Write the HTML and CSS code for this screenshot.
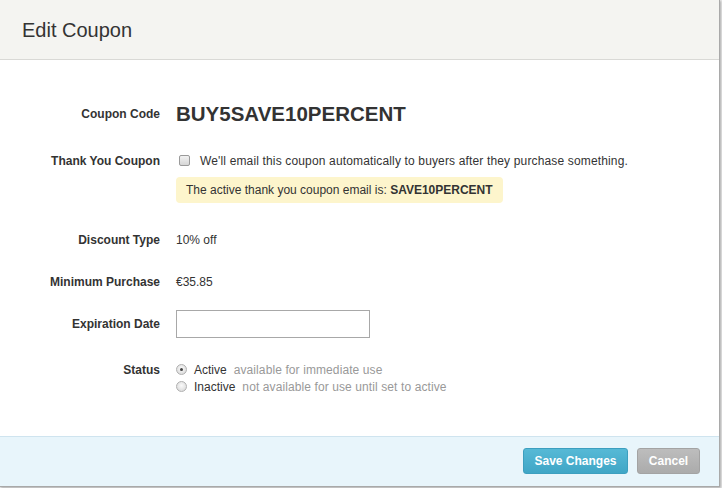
FILE: index.html
```html
<!DOCTYPE html>
<html>
<head>
<meta charset="utf-8">
<link rel="stylesheet" href="styles.css">
</head>
<body>
<div class="dialog">
  <div class="dialog-header"><h1 class="title">Edit Coupon</h1></div>
  <div class="dialog-body">
    <div class="row row-code">
      <div class="label">Coupon Code</div>
      <div class="value code">BUY5SAVE10PERCENT</div>
    </div>
    <div class="row row-thanks">
      <div class="label">Thank You Coupon</div>
      <div class="value">
        <label class="check-line"><span class="checkbox"></span>We'll email this coupon automatically to buyers after they purchase something.</label>
        <div class="notice">The active thank you coupon email is: <strong>SAVE10PERCENT</strong></div>
      </div>
    </div>
    <div class="row row-discount">
      <div class="label">Discount Type</div>
      <div class="value">10% off</div>
    </div>
    <div class="row row-min">
      <div class="label">Minimum Purchase</div>
      <div class="value">€35.85</div>
    </div>
    <div class="row row-exp">
      <div class="label">Expiration Date</div>
      <div class="value"><span class="input"></span></div>
    </div>
    <div class="row row-status">
      <div class="label">Status</div>
      <div class="value">
        <div class="radio-line"><span class="radio checked"></span><span class="opt">Active</span><span class="desc">available for immediate use</span></div>
        <div class="radio-line"><span class="radio"></span><span class="opt">Inactive</span><span class="desc">not available for use until set to active</span></div>
      </div>
    </div>
  </div>
  <div class="dialog-footer">
    <button class="btn btn-primary">Save Changes</button>
    <button class="btn btn-cancel">Cancel</button>
  </div>
</div>
</body>
</html>
```

FILE: styles.css
```css
html, body {
  margin: 0;
  padding: 0;
  background: #e9e9e9;
}
body {
  width: 722px;
  height: 488px;
  overflow: hidden;
  font-family: "Liberation Sans", Arial, sans-serif;
  color: #333;
  font-size: 12px;
}
.dialog {
  width: 720px;
  height: 487px;
  background: #fff;
  border-right: 1px solid #a9a9a9;
  border-bottom: 1px solid #a9a9a9;
  box-shadow: 1px 1px 2px rgba(0,0,0,0.25);
  display: flex;
  flex-direction: column;
  box-sizing: border-box;
}
.dialog-header {
  height: 60px;
  box-sizing: border-box;
  background: #f4f4f1;
  border-bottom: 1px solid #d9d9d6;
  padding: 0 22px;
  display: flex;
  align-items: center;
}
.title {
  margin: 0;
  font-size: 20px;
  font-weight: normal;
  color: #333;
  line-height: 24px;
}
.dialog-body {
  flex: 1;
  padding-top: 42px;
  display: flex;
  flex-direction: column;
}
.row {
  display: grid;
  grid-template-columns: 160px 1fr;
  column-gap: 16px;
}
.label {
  text-align: right;
  font-weight: bold;
  line-height: 16px;
  color: #333;
}
.value {
  line-height: 16px;
}
.row-code .label, .row-code .value { line-height: 24px; }
.code {
  font-size: 20.5px;
  font-weight: bold;
  color: #333;
}
.row-thanks { margin-top: 27px; }
.check-line {
  display: flex;
  align-items: center;
  padding-left: 3px;
  letter-spacing: 0.15px;
}
.checkbox {
  width: 11px;
  height: 11px;
  border: 1px solid #9a9a9a;
  border-radius: 2px;
  background: linear-gradient(#f2f2f2, #d6d6d6);
  box-sizing: border-box;
  margin-right: 10px;
  margin-top: -2px;
}
.notice {
  display: inline-block;
  margin-top: 8px;
  background: #fdf5cc;
  border-radius: 4px;
  padding: 5px 10px;
  color: #333;
}
.notice strong { font-weight: bold; }
.row-discount { margin-top: 29px; }
.row-min { margin-top: 26px; }
.row-exp { margin-top: 20px; align-items: center; }
.input {
  display: block;
  width: 194px;
  height: 28px;
  box-sizing: border-box;
  border: 1px solid #a8a8a8;
  background: #fff;
}
.row-status { margin-top: 24px; }
.row-status .value, .row-status .label { line-height: 17px; }
.radio-line {
  display: flex;
  align-items: center;
}
.radio {
  width: 11px;
  height: 11px;
  border-radius: 50%;
  border: 1px solid #b0b0b0;
  background: radial-gradient(circle at 50% 40%, #fafafa, #d4d4d4);
  box-sizing: border-box;
  margin-right: 7px;
  margin-top: -2px;
  position: relative;
}
.radio.checked::after {
  content: "";
  position: absolute;
  left: 3px;
  top: 3px;
  width: 3px;
  height: 3px;
  border-radius: 50%;
  background: #444;
}
.opt { color: #333; }
.desc { color: #999; margin-left: 7px; letter-spacing: 0.1px; }
.dialog-footer {
  height: 50px;
  box-sizing: border-box;
  background: #e8f5fb;
  border-top: 1px solid #cfe4ef;
  display: flex;
  justify-content: flex-end;
  align-items: flex-start;
  padding: 11px 19px 0 0;
  gap: 9px;
}
.btn {
  font-family: "Liberation Sans", Arial, sans-serif;
  font-size: 12px;
  font-weight: bold;
  color: #fff;
  height: 26px;
  border-radius: 3px;
  border: 1px solid transparent;
  padding: 0;
  margin: 0;
  line-height: 24px;
  white-space: nowrap;
  text-align: center;
}
.btn-primary {
  width: 105px;
  background: linear-gradient(#56b9d6, #40a6c6);
  border-color: #3d9fbf;
}
.btn-cancel {
  width: 63px;
  background: linear-gradient(#bdbdbd, #ababab);
  border-color: #a3a3a3;
}
```
